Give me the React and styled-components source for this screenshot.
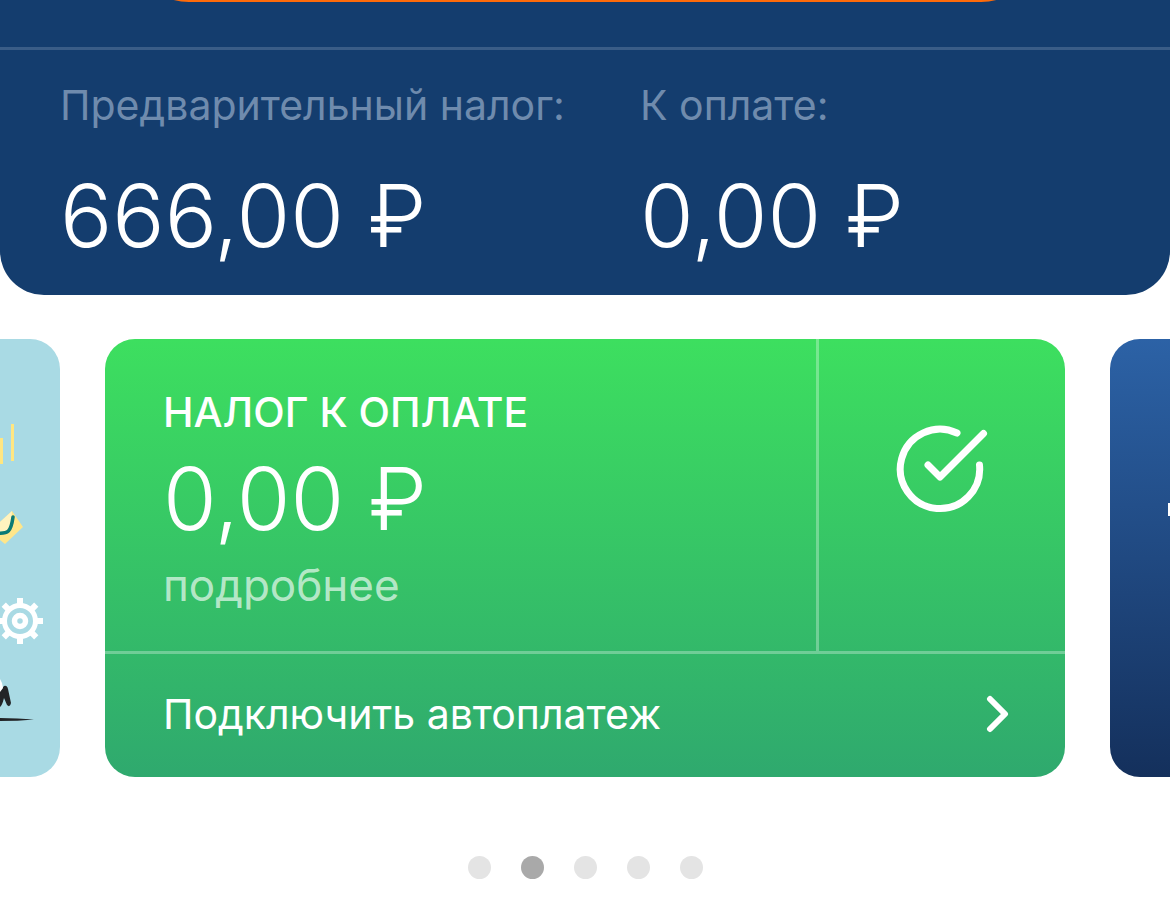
import styled, { createGlobalStyle } from 'styled-components';

const GlobalStyle = createGlobalStyle`
  * {
    box-sizing: border-box;
  }
  body {
    margin: 0;
    background: #fff;
    font-family: Inter, 'Liberation Sans', sans-serif;
    overflow-x: hidden;
  }
  h2, p, dl, dt, dd {
    margin: 0;
  }
`;

const Header = styled.header`
  background: #143d6e;
  color: #fff;
  border-radius: 0 0 44px 44px;
`;

const HeaderAction = styled.div`
  height: 50px;
  display: flex;
  justify-content: center;
  align-items: flex-start;
  border-bottom: 3px solid #3a5d87;
`;

const OrangeButton = styled.button`
  width: 78%;
  height: 120px;
  margin-top: -118px;
  border: none;
  border-radius: 60px;
  background: #ff6b0a;
  cursor: pointer;
`;

const Summary = styled.dl`
  display: grid;
  grid-template-columns: 58fr 53fr;
  padding: 30px 0 27px 60px;
`;

const Label = styled.dt`
  font-size: 41px;
  line-height: 50px;
  color: #6f8bad;
  white-space: nowrap;
`;

const Amount = styled.p`
  font-size: 87px;
  font-weight: 300;
  line-height: 104px;
  white-space: nowrap;
`;

const SummaryAmount = styled(Amount).attrs({ as: 'dd' })`
  margin-top: 34px;
`;

const Carousel = styled.section`
  display: flex;
  justify-content: center;
  gap: 45px;
  margin-top: 44px;
  overflow: hidden;
`;

const Card = styled.article`
  flex: 0 0 calc(100% - 210px);
  display: flex;
  justify-content: ${(props) => props.$align || 'flex-start'};
  border-radius: 30px;
  overflow: hidden;
  color: #fff;
  background: ${(props) => props.$background};
`;

const TaxCard = styled(Card)`
  flex-direction: column;
`;

const CardTop = styled.div`
  display: flex;
  border-bottom: 3px solid rgba(255, 255, 255, 0.3);
`;

const CardInfo = styled.div`
  flex: 1;
  padding: 48px 58px 40px;
  border-right: 3px solid rgba(255, 255, 255, 0.3);
`;

const CardTitle = styled.h2`
  font-size: 41px;
  font-weight: 500;
  line-height: 50px;
  white-space: nowrap;
`;

const CardAmount = styled(Amount)`
  margin-top: 10px;
`;

const MoreLink = styled.a`
  display: block;
  margin-top: 8px;
  font-size: 44px;
  line-height: 52px;
  color: rgba(255, 255, 255, 0.65);
  text-decoration: none;
`;

const CardStatus = styled.div`
  width: 246px;
  display: flex;
  justify-content: center;
  padding-top: 84px;
`;

const AutopayButton = styled.button`
  display: flex;
  align-items: center;
  justify-content: space-between;
  height: 123px;
  padding: 0 56px 4px 58px;
  border: none;
  background: none;
  color: #fff;
  font-family: inherit;
  font-size: 41px;
  text-align: left;
  cursor: pointer;
`;

const Dots = styled.nav`
  display: flex;
  justify-content: center;
  gap: 30px;
  padding: 79px 0 26px;
`;

const Dot = styled.button`
  width: 23px;
  height: 23px;
  padding: 0;
  border: none;
  border-radius: 50%;
  background: ${(props) => (props.$active ? '#a9a9a9' : '#e4e4e4')};
  cursor: pointer;
`;

const CheckIcon = () => (
  <svg
    width="94"
    height="90"
    viewBox="0 0 94 90"
    fill="none"
    stroke="#fff"
    strokeWidth="7"
    strokeLinecap="round"
    strokeLinejoin="round"
  >
    <path d="M62 10A39.7 39.7 0 1 0 84.5 42" />
    <path d="M33 42L45 54L88.5 10.5" />
  </svg>
);

const ChevronIcon = () => (
  <svg
    width="24"
    height="38"
    viewBox="0 0 24 38"
    fill="none"
    stroke="#fff"
    strokeWidth="6"
    strokeLinecap="round"
    strokeLinejoin="round"
  >
    <path d="M5 4L20 19L5 34" />
  </svg>
);

const teeth = [0, 45, 90, 135, 180, 225, 270, 315];

const Illustration = () => (
  <svg width="60" height="438" viewBox="0 0 60 438">
    <rect x="0" y="99" width="3" height="26" fill="#ffe680" />
    <rect x="11" y="85" width="3" height="37" fill="#ffe680" />
    <path d="M0 183L12 172L23 188L5 205L0 201Z" fill="#ffe68a" />
    <path d="M0 183L12 172L11 186Q9 193 0 193Z" fill="#fff3bf" />
    <path
      d="M-3 194C8 195 11 193 13 178"
      fill="none"
      stroke="#0b7a75"
      strokeWidth="3.5"
      strokeLinecap="round"
    />
    <g transform="translate(20 282)">
      {teeth.map((angle) => (
        <rect
          key={angle}
          x="-3"
          y="-23"
          width="6"
          height="8"
          fill="#fff"
          transform={`rotate(${angle})`}
        />
      ))}
      <circle r="15.5" fill="none" stroke="#fff" strokeWidth="5" />
      <circle r="5.5" fill="none" stroke="#fff" strokeWidth="5.5" />
    </g>
    <path
      d="M0 352L4 347Q7 346 8 350L11 364Q10 369 7 366L4 359Q2 367 0 368Z"
      fill="#222427"
    />
    <path d="M0 340L2 344L3 349L0 353Z" fill="#fff" />
    <path d="M0 379Q18 379 34 380.5Q18 382 0 382Z" fill="#222427" />
  </svg>
);

const NextCardMark = () => (
  <svg width="60" height="438" viewBox="0 0 60 438">
    <rect x="58" y="164" width="2" height="13" fill="#fff" />
  </svg>
);

const App = () => {
  return (
    <>
      <GlobalStyle />
      <Header>
        <HeaderAction>
          <OrangeButton aria-label="Оплатить" />
        </HeaderAction>
        <Summary>
          <div>
            <Label>Предварительный налог:</Label>
            <SummaryAmount>666,00 ₽</SummaryAmount>
          </div>
          <div>
            <Label>К оплате:</Label>
            <SummaryAmount>0,00 ₽</SummaryAmount>
          </div>
        </Summary>
      </Header>
      <main>
        <Carousel>
          <Card $background="#a9dae4" $align="flex-end">
            <Illustration />
          </Card>
          <TaxCard $background="linear-gradient(#3ddf5f, #2fa96e)">
            <CardTop>
              <CardInfo>
                <CardTitle>НАЛОГ К ОПЛАТЕ</CardTitle>
                <CardAmount>0,00 ₽</CardAmount>
                <MoreLink href="#details">подробнее</MoreLink>
              </CardInfo>
              <CardStatus>
                <CheckIcon />
              </CardStatus>
            </CardTop>
            <AutopayButton>
              Подключить автоплатеж
              <ChevronIcon />
            </AutopayButton>
          </TaxCard>
          <Card $background="linear-gradient(#2c62a6, #14305c)">
            <NextCardMark />
          </Card>
        </Carousel>
        <Dots>
          {[1, 2, 3, 4, 5].map((page) => (
            <Dot key={page} $active={page === 2} aria-label={`${page}`} />
          ))}
        </Dots>
      </main>
    </>
  );
};

export default App;
